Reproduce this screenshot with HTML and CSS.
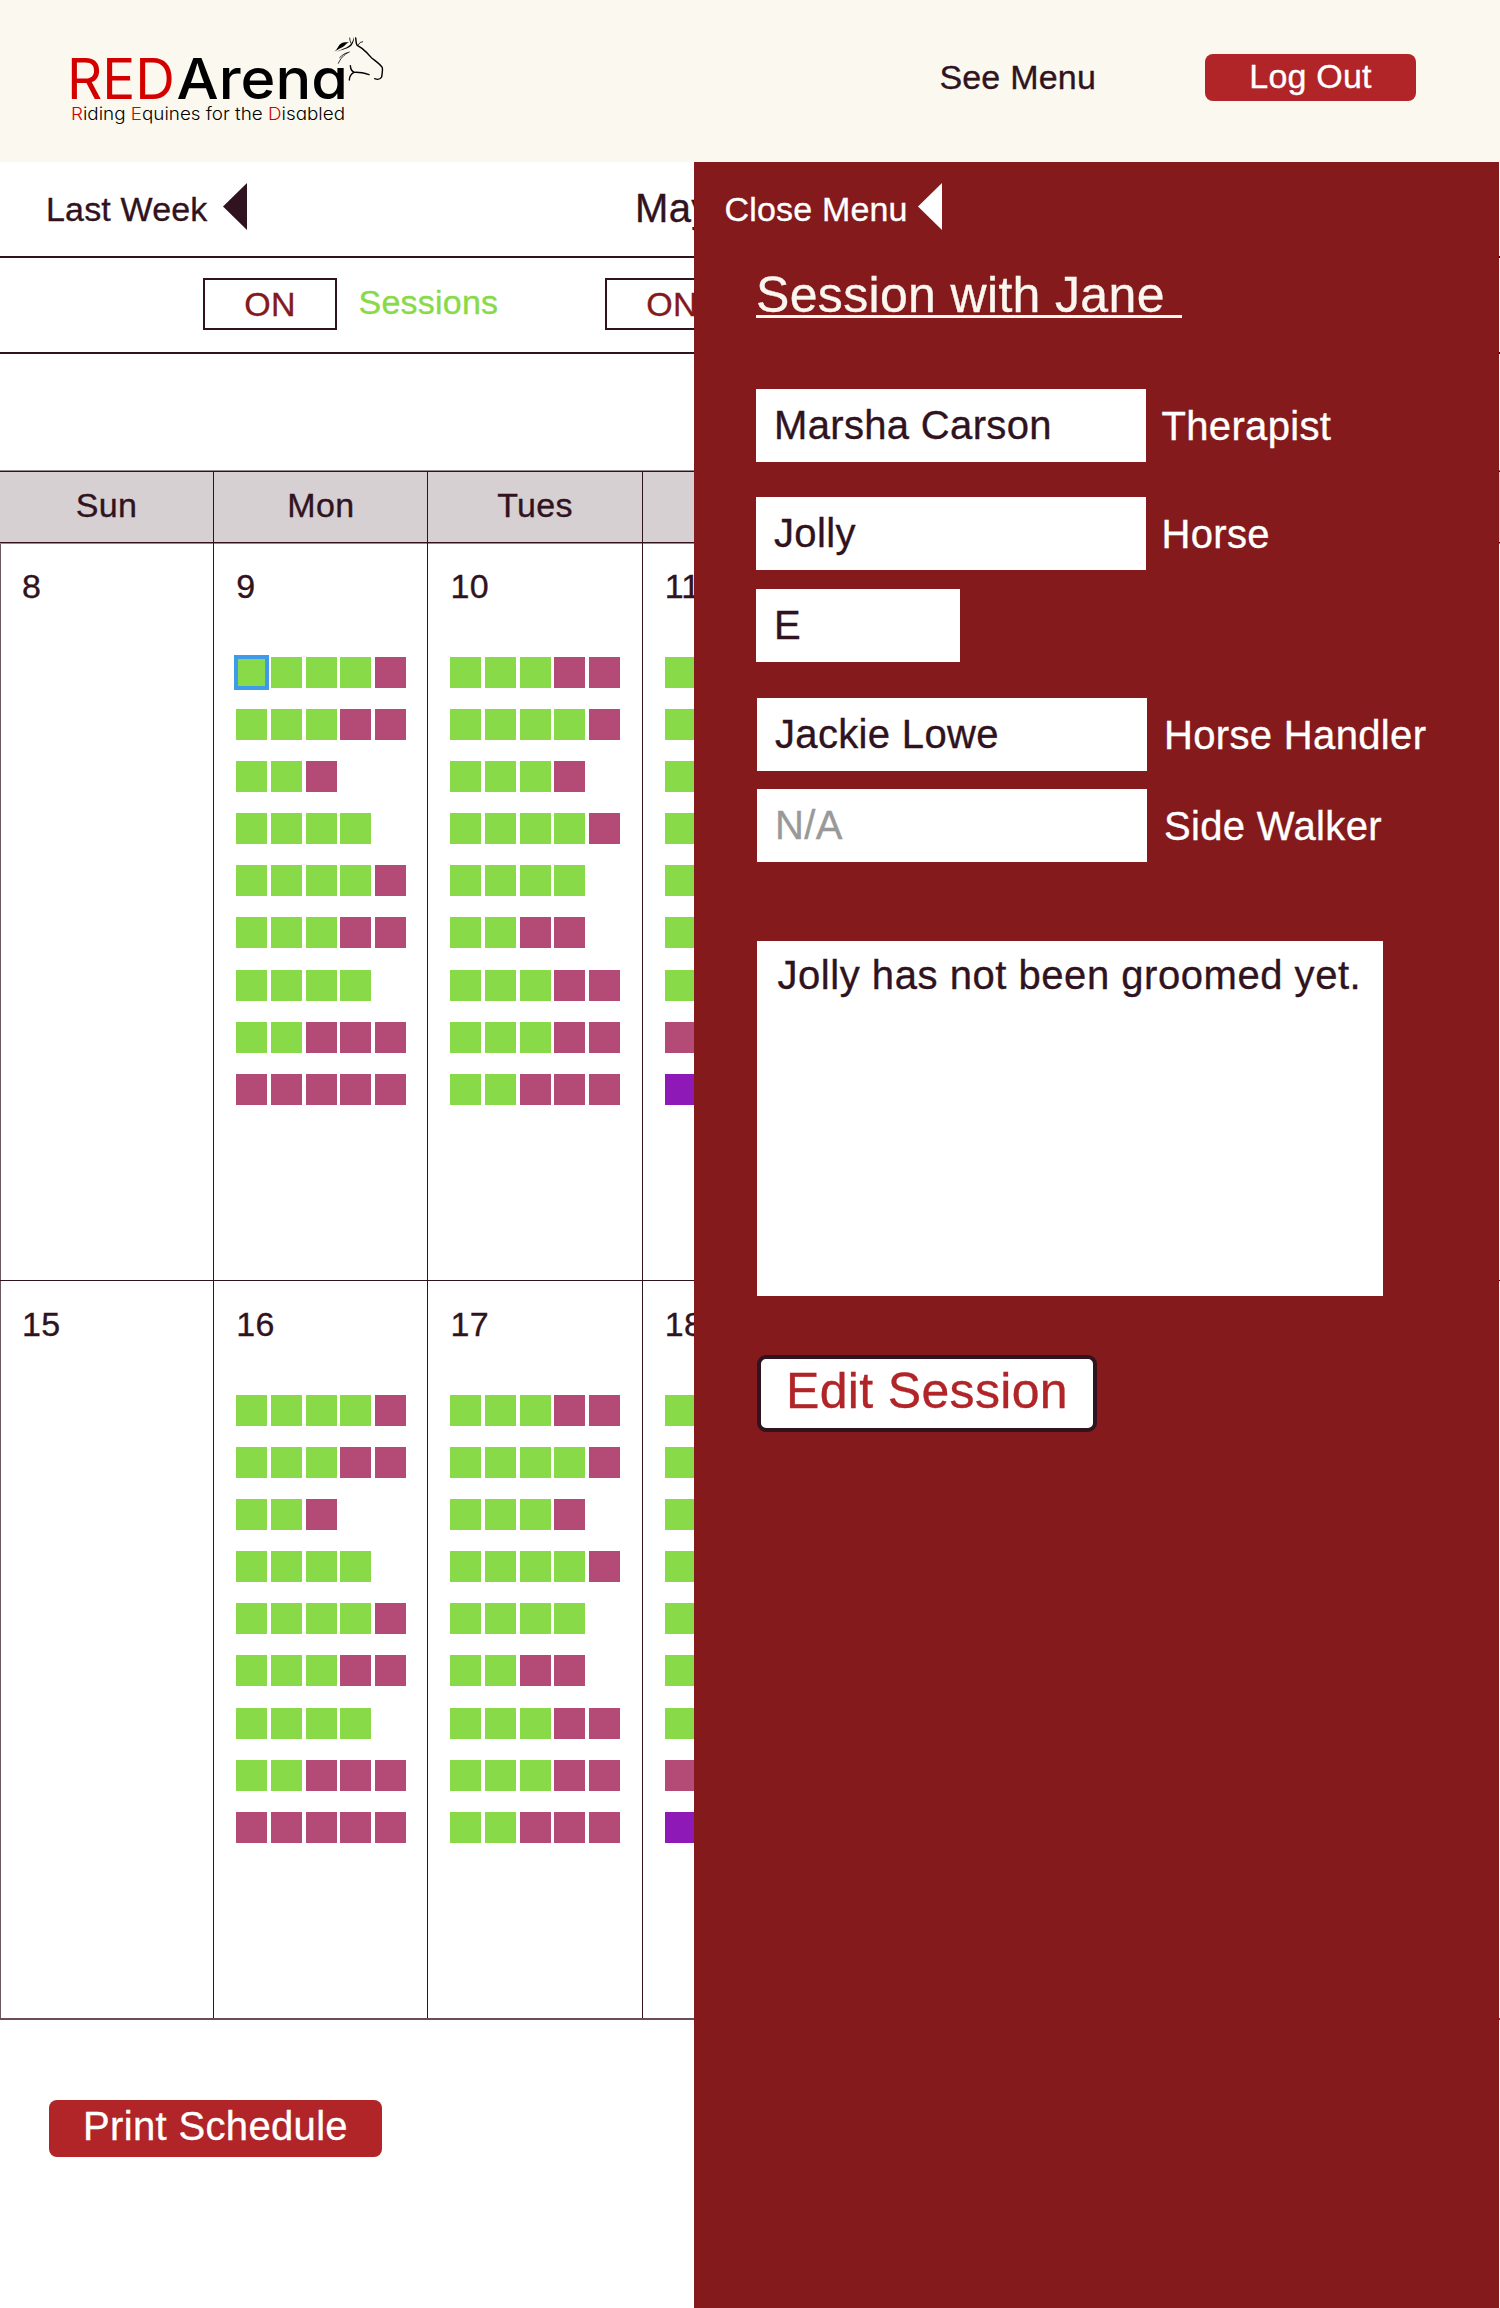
FILE: index.html
```html
<!DOCTYPE html>
<html lang="en">
<head>
<meta charset="utf-8">
<title>RED Arena – Schedule</title>
<link rel="stylesheet" href="styles.css">
</head>
<body>
<header class="site-header">
  <svg class="logo" width="350" height="120" viewBox="0 0 350 120" role="img" aria-label="RED Arena">
    <g class="logo-name">
      <text class="logo-red" x="17" y="78.7" textLength="108" lengthAdjust="spacingAndGlyphs">RED</text>
      <text class="logo-black" x="126.5" y="78.7" textLength="171.5" lengthAdjust="spacingAndGlyphs">Arena</text>
    </g>
    <text class="logo-tag" x="21" y="100" textLength="274" lengthAdjust="spacingAndGlyphs"><tspan class="logo-red">R</tspan>iding <tspan class="logo-red">E</tspan>quines for the <tspan class="logo-red">D</tspan>isabled</text>
    <g class="horse" transform="scale(.33333)">
      <path class="horse-fill" d="M844 98C856 96 860 88 866 78C874 66 884 67 897 67C888 70 886 78 877 82C866 87 858 94 844 98Z"/>
      <path class="horse-fill" d="M860 96C876 86 892 84 903 72C906 66 911 58 912 50C913 60 910 68 904 77C893 87 878 87 860 96Z"/>
      <path class="horse-thin" d="M899 54Q899 62 903 70M938 65Q929 65 925 74M898 96C882 102 870 118 865 130M892 98C882 101 876 106 869 113"/>
      <path class="horse-line" d="M917 54C919 62 917 74 923 77L936 85C945 92 954 101 964 113C976 123 989 131 997 143C999 153 996 161 995 171C991 178 984 180 974 176"/>
      <path class="horse-line" d="M901 137C902 150 906 156 915 157C931 156 944 160 957 164M912 157C903 162 898 168 898 180"/>
    </g>
  </svg>
  <nav class="header-nav">
    <a class="see-menu">See Menu</a>
    <a class="btn logout">Log Out</a>
  </nav>
</header>

<main class="schedule">
  <div class="bar week-bar">
    <a class="week-link">Last Week</a>
    <svg class="arrow" width="24" height="47" viewBox="0 0 24 47"><path d="M24 0V47L0 23.5Z"/></svg>
    <span class="month">May</span>
  </div>
  <div class="bar filter-bar">
    <div class="toggle">ON</div>
    <span class="filter-name">Sessions</span>
    <div class="toggle">ON</div>
  </div>
  <section class="calendar">
    <div class="day-names" id="day-names"></div>
    <div id="weeks"></div>
  </section>
  <a class="btn print">Print Schedule</a>
</main>

<aside class="panel">
  <div class="close-menu">
    <span>Close Menu</span>
    <svg class="arrow" width="24" height="47" viewBox="0 0 24 47"><path d="M24 0V47L0 23.5Z"/></svg>
  </div>
  <h1 class="panel-title">Session with Jane </h1>
  <div class="fields">
    <div class="field therapist"><div class="value">Marsha Carson</div><span>Therapist</span></div>
    <div class="field horse-name"><div class="value">Jolly</div><span>Horse</span></div>
    <div class="field arena"><div class="value short">E</div></div>
    <div class="field handler"><div class="value">Jackie Lowe</div><span>Horse Handler</span></div>
    <div class="field walker"><div class="value empty">N/A</div><span>Side Walker</span></div>
  </div>
  <div class="notes">Jolly has not been groomed yet.</div>
  <a class="edit">Edit Session</a>
</aside>
<script src="script.js"></script>
</body>
</html>
```
FILE: styles.css
```css
* { box-sizing: border-box; }

body {
  margin: 0;
  width: 1500px;
  height: 2308px;
  position: relative;
  overflow: hidden;
  background: #fff;
  color: #30131e;
  font: 34px/40px "Liberation Sans", Arial, sans-serif;
  letter-spacing: .01em;
  -webkit-text-stroke: .35px;
}

/* Header */
.site-header {
  display: flex;
  justify-content: space-between;
  height: 162px;
  padding: 20px 84px 0 50px;
  background: #fbf8f0;
}
.logo { overflow: visible; letter-spacing: 0; -webkit-text-stroke: 0; }
.logo text { font-family: Inter, sans-serif; font-feature-settings: "cv11"; }
.logo-name { font-size: 56px; }
.logo-black { font-weight: 500; }
.logo-red { fill: #d40000; }
.logo-tag { font-size: 17.5px; font-weight: 300; }
.horse path { stroke: #000; fill: none; stroke-linecap: round; }
.horse .horse-fill { fill: #000; stroke: none; }
.horse .horse-line { stroke-width: 4.2; }
.horse .horse-thin { stroke-width: 2.4; }
.header-nav { display: flex; align-items: flex-start; gap: 109px; padding-top: 34px; letter-spacing: .006em; }
.see-menu { padding-top: 3px; }
.btn {
  display: flex;
  justify-content: center;
  background: #b12427;
  color: #fff;
  border-radius: 8px;
}
.logout { width: 211px; height: 47px; padding-top: 2px; }

/* Week and filter bars */
.bar { display: flex; align-items: center; height: 96px; border-bottom: 2px solid #30131e; }
.arrow { display: block; fill: currentColor; flex: none; }
.week-bar { padding-left: 46px; }
.week-link { width: 177px; letter-spacing: .005em; }
.week-bar .arrow { margin-top: -5px; }
.month { margin: -3px 0 0 388px; font-size: 40px; }
.filter-bar { padding: 0 0 2px 203px; }
.toggle {
  width: 134px;
  height: 52px;
  padding-top: 4px;
  border: 2px solid #30131e;
  color: #841a1c;
  text-align: center;
}
.filter-name { width: 246px; margin-left: 21.5px; padding-bottom: 4px; color: #88da48; letter-spacing: .007em; }
.filter-name + .toggle { margin-left: .5px; }

/* Calendar */
.calendar { margin-top: 117px; border-left: 1px solid #6d5760; }
.day-names, .week { display: grid; grid-template-columns: repeat(7, 1fr); width: 1499.5px; margin-left: -1px; }
.day-names {
  height: 72px;
  border: solid #30131e;
  border-width: 1px 0;
  background: #d6d0d2;
  box-shadow: 0 -1px #97898e, 0 1px #97898e;
}
.day-name { padding-top: 13px; text-align: center; border-right: 1px solid #30131e; }
.week { height: 738px; border-bottom: 1px solid #30131e; }
.week:last-child { height: 739px; border-bottom: 2px solid #6a4d58; }
.day { padding: 23px 0 0 22px; border-right: 1px solid #30131e; }
.slots { display: grid; gap: 21.1px; margin-top: 51px; }
.slot-row { display: flex; gap: 3.7px; height: 31px; }
.slot { width: 31px; height: 31px; }
.session { background: #88da48; }
.lesson { background: #b44a76; }
.event { background: #8f19b7; }
.selected { outline: 4px solid #3d9be9; outline-offset: -2px; }
.print {
  width: 333px;
  height: 57px;
  margin: 80px 0 0 49px;
  padding-top: 6px;
  font-size: 40px;
}

/* Session panel slides over the schedule */
.panel {
  position: absolute;
  top: 162px;
  left: 694px;
  width: 805px;
  height: 2146px;
  padding-left: 62px;
  background: #841a1c;
  color: #fff;
}
.close-menu { display: flex; align-items: center; height: 94px; margin-left: -31.5px; letter-spacing: .005em; }
.close-menu span { width: 193.5px; }
.close-menu .arrow { margin-top: -5px; }
.panel-title {
  width: 426px;
  height: 53px;
  margin: 9px 0 71px;
  border-bottom: 3px solid #fbf7f0;
  color: #fbf7f0;
  font-size: 50px;
  font-weight: 400;
  line-height: 60px;
  white-space: pre;
}
.fields { font-size: 40px; }
.field { display: flex; align-items: center; height: 73px; gap: 15.5px; }
.value { width: 390px; height: 73px; padding-left: 18px; background: #fff; color: #30131e; line-height: 73px; }
.value.short { width: 204px; }
.value.empty { color: #999; }
.horse-name { margin-top: 35px; }
.arena { margin-top: 19px; }
.handler { margin-top: 36px; }
.walker { margin-top: 18px; }
.handler, .walker { padding-left: 1px; gap: 17px; }
.notes {
  width: 626px;
  height: 355px;
  margin: 79px 0 0 1px;
  padding: 14px 0 0 20.5px;
  background: #fff;
  color: #30131e;
  font-size: 40px;
  letter-spacing: .0135em;
}
.edit {
  display: flex;
  justify-content: center;
  width: 340px;
  height: 77px;
  margin: 59px 0 0 1px;
  border: 4px solid #30131e;
  border-radius: 9px;
  background: #fff;
  color: #b12427;
  font-size: 50px;
  line-height: 64px;
}
```
FILE: script.js
```js
// s = session, l = lesson, e = event; one string per row of the day
const monday = ["ssssl", "sssll", "ssl", "ssss", "ssssl", "sssll", "ssss", "sslll", "lllll"];
const tuesday = ["sssll", "ssssl", "sssl", "ssssl", "ssss", "ssll", "sssll", "sssll", "sslll"];
const wednesday = ["s", "s", "s", "s", "s", "s", "s", "l", "e"];
const kinds = { s: "session", l: "lesson", e: "event" };

function add(parent, className, text) {
  const el = document.createElement("div");
  el.className = className;
  if (text) el.textContent = text;
  parent.appendChild(el);
  return el;
}

const names = document.getElementById("day-names");
["Sun", "Mon", "Tues", "Wed", "Thur", "Fri", "Sat"].forEach(n => add(names, "day-name", n));

const weeks = document.getElementById("weeks");
[8, 15].forEach(first => {
  const week = add(weeks, "week");
  [[], monday, tuesday, wednesday, [], [], []].forEach((rows, i) => {
    const day = add(week, "day", String(first + i));
    const slots = add(day, "slots");
    rows.forEach(row => {
      const line = add(slots, "slot-row");
      [...row].forEach(kind => add(line, "slot " + kinds[kind]));
    });
  });
});
weeks.querySelector(".slot").classList.add("selected");
```
